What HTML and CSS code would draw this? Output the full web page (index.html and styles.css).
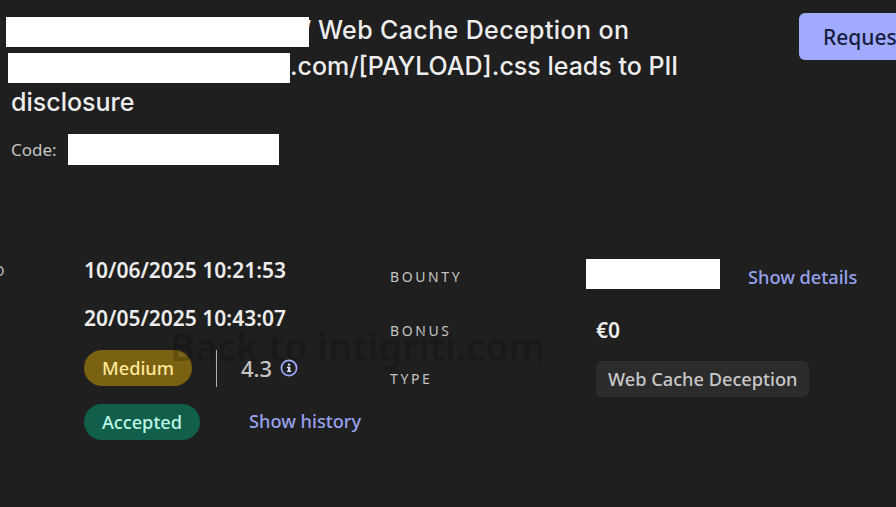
FILE: index.html
```html
<!DOCTYPE html>
<html lang="en">
<head>
    <meta charset="UTF-8">
    <meta name="viewport" content="width=device-width, initial-scale=1.0">
    <title>Submission</title>
    <link rel="stylesheet" href="styles.css">
</head>
<body>
    <div class="page">
        <div class="header">
            <div class="heading">
                <h1 class="title"><span class="redact redact-first"></span><span class="slash">/</span> <span class="title-wide">Web Cache Deception on</span> <span class="redact redact-second"></span>.com/[PAYLOAD].css leads to PII disclosure</h1>
                <div class="code">
                    <span>Code:</span>
                    <span class="redact redact-code"></span>
                </div>
            </div>
            <button class="request-btn">Request retest</button>
        </div>

        <div class="details">
            <div class="details-left">
                <div class="label">LAST UPDATED</div>
                <div class="date">10/06/2025 10:21:53</div>
                <div class="label">CREATED</div>
                <div class="date">20/05/2025 10:43:07</div>
                <div class="label">SEVERITY</div>
                <div class="severity">
                    <span class="pill pill-medium">Medium</span>
                    <span class="divider"></span>
                    <span class="score">4.3</span>
                    <svg class="info-icon" width="18" height="18" viewBox="0 0 18 18" fill="none">
                        <circle cx="9" cy="9" r="7.6" stroke="#9fa9ff" stroke-width="1.7"/>
                        <rect x="7.9" y="7.8" width="2.4" height="5" fill="#d8dcff"/>
                        <rect x="6.9" y="7.8" width="2" height="1.3" fill="#d8dcff"/>
                        <rect x="6.9" y="11.8" width="4.4" height="1.3" fill="#d8dcff"/>
                        <rect x="7.9" y="4.7" width="2.3" height="2" fill="#d8dcff"/>
                    </svg>
                </div>
                <div class="label">STATUS</div>
                <div class="status">
                    <span class="pill pill-accepted">Accepted</span>
                    <a class="link link-history" href="#">Show history</a>
                </div>
            </div>

            <div class="details-right">
                <div class="label">BOUNTY</div>
                <div class="bounty">
                    <span class="redact redact-bounty"></span>
                    <a class="link" href="#">Show details</a>
                </div>
                <div class="label">BONUS</div>
                <div class="bonus">€0</div>
                <div class="label">TYPE</div>
                <div><span class="tag">Web Cache Deception</span></div>
            </div>
        </div>

        <div class="back-link">Back to intigriti.com</div>
    </div>
</body>
</html>
```

FILE: styles.css
```css
* {
    margin: 0;
    padding: 0;
    box-sizing: border-box;
}

body {
    font-family: "Noto Sans", "Open Sans", sans-serif;
    background-color: #1f1f1f;
    color: #e6e6e6;
    height: 100vh;
    overflow: hidden;
}

.page {
    position: relative;
    height: 100vh;
    overflow: hidden;
}

.header {
    display: flex;
    align-items: flex-start;
    width: 1100px;
    padding: 13px 0 0 11px;
}

.heading {
    width: 788px;
}

.title {
    width: 700px;
    margin-top: -1px;
    font-family: "Inter", "Open Sans", sans-serif;
    font-size: 25px;
    font-weight: 500;
    line-height: 36px;
    color: #ededed;
}

.title-wide {
    letter-spacing: 0.38px;
}

.redact {
    display: inline-block;
    background: #ffffff;
    vertical-align: middle;
}

.redact-first {
    position: relative;
    z-index: 1;
    width: 303px;
    height: 30px;
    margin-left: -5px;
}

.redact-second {
    width: 282px;
    height: 30px;
    margin-left: -3px;
}

.slash {
    margin-left: -7px;
}

.code {
    display: flex;
    align-items: center;
    gap: 11px;
    margin-top: 14px;
    font-size: 17px;
    color: #c4c4c4;
}

.redact-code {
    width: 211px;
    height: 31px;
}

.request-btn {
    flex-shrink: 0;
    height: 47px;
    padding: 0 24px;
    border: none;
    border-radius: 6px;
    background: #a0abff;
    color: #181c3f;
    font-family: inherit;
    font-size: 21px;
    font-weight: 500;
}

.details {
    display: flex;
    margin-top: 81px;
}

.details-left {
    display: grid;
    grid-template-columns: 206px 306px;
    grid-template-rows: 48px 48px 52px 56px;
    align-items: center;
    margin-left: -122px;
}

.details-right {
    display: grid;
    grid-template-columns: 206px auto;
    grid-template-rows: 58px 50px 46px;
    align-items: center;
    margin-top: 2px;
}

.details-right .label {
    margin-bottom: 2px;
}

.label {
    font-size: 14px;
    letter-spacing: 2.6px;
    color: #c4c4c4;
    white-space: nowrap;
}

.date {
    font-size: 21px;
    font-weight: 600;
    color: #ededed;
}

.severity,
.status,
.bounty {
    display: flex;
    align-items: center;
}

.pill {
    display: inline-flex;
    align-items: center;
    justify-content: center;
    height: 36px;
    border-radius: 18px;
    font-size: 18.2px;
    font-weight: 500;
}

.pill-medium {
    width: 108px;
    background: #7b6212;
    color: #ffe899;
}

.pill-accepted {
    width: 116px;
    background: #115e4a;
    color: #bdf6e4;
}

.divider {
    width: 1px;
    height: 37px;
    margin: 0 24px;
    background: #b0b0b0;
}

.score {
    font-size: 22px;
    font-weight: 500;
    color: #c4c4c4;
    margin-right: 8px;
}

.link {
    font-size: 18.2px;
    font-weight: 500;
    color: #97a2ee;
    text-decoration: none;
}

.link-history {
    margin-left: 49px;
    margin-bottom: 3px;
}

.bounty {
    margin-left: -10px;
}

.redact-bounty {
    width: 134px;
    height: 30px;
    margin-right: 28px;
    margin-bottom: 6px;
}

.bonus {
    margin-bottom: 2px;
    font-size: 21px;
    font-weight: 600;
    color: #ededed;
}

.tag {
    display: inline-block;
    padding: 5px 12px;
    border-radius: 6px;
    background: #2c2c2c;
    font-size: 18.2px;
    font-weight: 500;
    line-height: 26px;
    color: #c8c8c8;
}

.back-link {
    position: absolute;
    left: 170px;
    top: 320px;
    font-size: 38px;
    font-weight: 600;
    line-height: 52px;
    color: rgba(0, 0, 0, 0.2);
    white-space: nowrap;
}
```
